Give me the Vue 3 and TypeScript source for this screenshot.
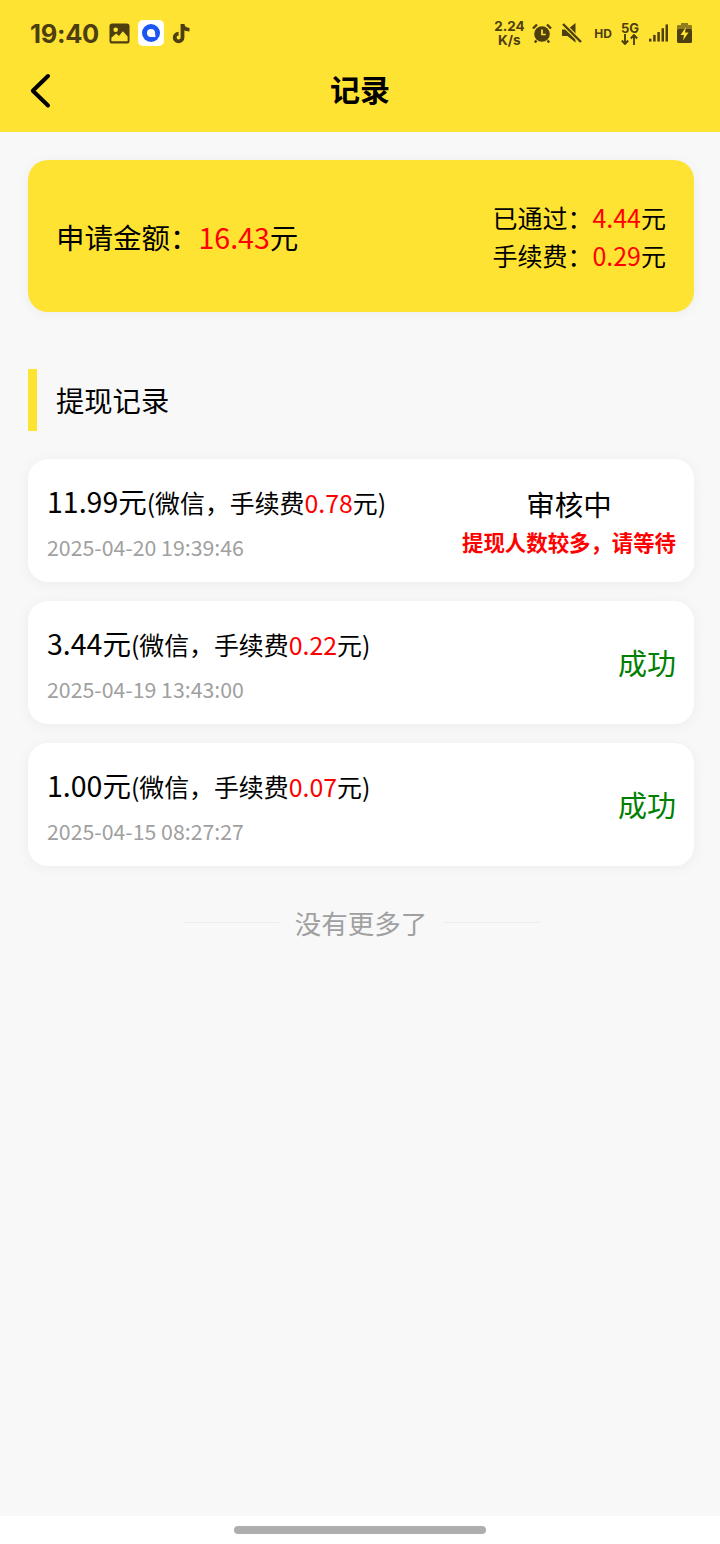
<script setup lang="ts">
interface Rec { amount: string; fee: string; date: string; }
const records: Rec[] = [
  { amount: '3.44', fee: '0.22', date: '2025-04-19 13:43:00' },
  { amount: '1.00', fee: '0.07', date: '2025-04-15 08:27:27' },
];
</script>

<template>
  <div class="page">
    <header class="head">
      <div class="status">
        <div class="st-left">
          <span class="time">19:40</span>
          <svg class="ic-photo" width="21" height="21" viewBox="0 0 22 22">
            <rect x="0.5" y="0.5" width="21" height="21" rx="3" fill="#4d3f10"/>
            <circle cx="7" cy="7" r="2.4" fill="#ffe333"/>
            <path d="M2.5 19v-3.500l5-4.500 3 2.600 4-5 5 5.600V19z" fill="#ffe333"/>
          </svg>
          <span class="app-tile">
            <svg width="18" height="18" viewBox="0 0 18 18">
              <circle cx="9" cy="9" r="9" fill="#1c56f0"/>
              <circle cx="9" cy="9" r="4" fill="#fff"/>
              <path d="M9 13h4.500L13 8.500z" fill="#fff"/>
            </svg>
          </span>
          <svg class="ic-tt" width="20" height="21" viewBox="0 0 20 21">
            <path d="M10.500 1v13.500a3.900 3.900 0 1 1-3.900-3.900" fill="none" stroke="#4d3f10" stroke-width="3.800"/>
            <path d="M10.500 1.500c.4 3 2.900 5 7 5.200" fill="none" stroke="#4d3f10" stroke-width="3.600"/>
          </svg>
        </div>
        <div class="st-right">
          <span class="speed">2.24<br>K/s</span>
          <svg class="ic-alarm" width="20" height="20" viewBox="0 0 20 20">
            <circle cx="10" cy="11" r="7.800" fill="#4d3f10"/>
            <path d="M1 5.500 5 1.500M19 5.500l-4-4M4.500 17.500 2.800 19.500M15.500 17.500l1.700 2" stroke="#4d3f10" stroke-width="2.400" fill="none"/>
            <path d="M10 6.500v5h3.800" stroke="#ffe333" stroke-width="1.700" fill="none"/>
          </svg>
          <svg class="ic-mute" width="20" height="20" viewBox="0 0 20 20">
            <path d="M0 6.500h5.500L13.500 0v19.500l-8-6.500H0z" fill="#4d3f10"/>
            <path d="M1 1 19 19" stroke="#ffe333" stroke-width="4.500"/>
            <path d="M1 1 19 19" stroke="#4d3f10" stroke-width="2.400"/>
          </svg>
          <span class="hd">HD</span>
          <span class="net">
            <span class="net-g">5G</span>
            <svg width="17" height="11" viewBox="0 0 17 11">
              <path d="M4 0v10M.8 6.500 4 10l3.200-3.500M13 11V1M9.800 4.500 13 1l3.200 3.500" stroke="#4d3f10" stroke-width="1.900" fill="none"/>
            </svg>
          </span>
          <svg class="ic-sig" width="19" height="18" viewBox="0 0 20 18">
            <rect x="0" y="15" width="2.600" height="3" fill="#4d3f10"/>
            <rect x="4.400" y="11" width="2.600" height="7" fill="#4d3f10"/>
            <rect x="8.800" y="8" width="2.600" height="10" fill="#4d3f10"/>
            <rect x="13.200" y="4" width="2.600" height="14" fill="#4d3f10"/>
            <rect x="17.400" y="0" width="2.600" height="18" fill="#4d3f10"/>
          </svg>
          <svg class="ic-bat" width="15" height="20" viewBox="0 0 15 20">
            <rect x="4" y="0" width="7" height="2.500" fill="#8f7d20"/>
            <rect x="0" y="2" width="15" height="5" rx="1" fill="#8f7d20"/>
            <rect x="0" y="6" width="15" height="14" rx="1.500" fill="#4d3f10"/>
            <path d="M9 4 3.500 12H7L6 17.500l5.500-8H8z" fill="#ffe333"/>
          </svg>
        </div>
      </div>
      <div class="nav">
        <svg class="back" width="24" height="36" viewBox="0 0 24 36">
          <path d="M21 3 5.800 17.800 21 32.500" fill="none" stroke="#000" stroke-width="4" stroke-linecap="round" stroke-linejoin="round"/>
        </svg>
        <h1 class="title">记录</h1>
      </div>
    </header>

    <main class="content">
      <section class="summary">
        <div class="sum-main">申请金额：<span class="red">16.43</span>元</div>
        <div class="sum-side">
          <div>已通过：<span class="red">4.44</span>元</div>
          <div>手续费：<span class="red">0.29</span>元</div>
        </div>
      </section>

      <div class="section-title">提现记录</div>

      <ul class="list">
        <li class="card">
          <div class="info">
            <div class="line"><span class="amt">11.99元</span>(微信，手续费<span class="red">0.78</span>元)</div>
            <div class="date">2025-04-20 19:39:46</div>
          </div>
          <div class="state">
            <div class="pending">审核中</div>
            <div class="note">提现人数较多，请等待</div>
          </div>
        </li>
        <li v-for="r in records" :key="r.date" class="card">
          <div class="info">
            <div class="line"><span class="amt">{{ r.amount }}元</span>(微信，手续费<span class="red">{{ r.fee }}</span>元)</div>
            <div class="date">{{ r.date }}</div>
          </div>
          <div class="state">
            <div class="ok">成功</div>
          </div>
        </li>
      </ul>

      <div class="end">
        <span class="rule"></span>
        <span class="end-text">没有更多了</span>
        <span class="rule"></span>
      </div>
    </main>

    <footer class="gesture"><span class="pill"></span></footer>
  </div>
</template>

<style>
html, body { margin: 0; background: #fff; }
</style>

<style scoped>
.page {
  width: 720px;
  height: 1544px;
  display: flex;
  flex-direction: column;
  background: #f8f8f8;
  font-family: "Noto Sans CJK SC", "Noto Sans", sans-serif;
  color: #000;
  overflow: hidden;
}
.head {
  height: 132px;
  background: #ffe333;
  flex: none;
}
.status {
  height: 66px;
  display: flex;
  justify-content: space-between;
  align-items: center;
  padding: 0 28px 0 30px;
  color: #4d3f10;
}
.st-left, .st-right { display: flex; align-items: center; }
.time {
  font-family: Inter, Roboto, sans-serif;
  font-size: 25.500px;
  font-weight: 700;
  letter-spacing: -0.3px;
  width: 79px;
}
.app-tile {
  width: 26px;
  height: 26px;
  margin-left: 8px;
  border-radius: 5px;
  background: #fff;
  display: flex;
  align-items: center;
  justify-content: center;
}
.ic-tt { margin-left: 8px; }
.speed {
  font-family: Inter, Roboto, sans-serif;
  font-size: 13.500px;
  font-weight: 700;
  line-height: 14px;
  text-align: center;
  width: 30px;
}
.ic-alarm { margin-left: 8px; }
.ic-mute { margin-left: 10px; }
.hd {
  font-family: Inter, Roboto, sans-serif;
  font-size: 12px;
  font-weight: 700;
  margin-left: 12px;
}
.net {
  display: flex;
  flex-direction: column;
  align-items: center;
  margin-left: 9px;
  font-family: Inter, Roboto, sans-serif;
  font-size: 13px;
  font-weight: 700;
  line-height: 12px;
}
.ic-sig { margin-left: 10px; }
.ic-bat { margin-left: 9px; }
.nav {
  height: 50px;
  display: grid;
  grid-template-columns: 1fr auto 1fr;
  align-items: center;
}
.back { margin-left: 27px; }
.title {
  margin: 0 0 6px;
  font-size: 30px;
  font-weight: 700;
  line-height: 44px;
}
.content {
  flex: 1;
  padding: 28px 26px 0 28px;
}
.red { color: #f00; }
.summary {
  height: 152px;
  border-radius: 20px;
  background: #ffe333;
  box-shadow: 0 2px 12px rgba(0, 0, 0, 0.05);
  display: flex;
  align-items: center;
  justify-content: space-between;
  padding: 0 28px;
}
.sum-main { font-size: 28.500px; line-height: 40px; margin-top: 2px; }
.sum-side { font-size: 25px; line-height: 38px; text-align: right; margin-top: -1px; }
.section-title {
  margin-top: 57px;
  height: 62px;
  border-left: 9px solid #ffe333;
  padding-left: 19px;
  font-size: 28.300px;
  line-height: 62px;
}
.list {
  list-style: none;
  margin: 28px 0 0;
  padding: 0;
  display: flex;
  flex-direction: column;
  gap: 19.500px;
}
.card {
  height: 122.500px;
  box-sizing: border-box;
  background: #fff;
  border-radius: 20px;
  box-shadow: 0 2px 14px rgba(0, 0, 0, 0.05);
  display: flex;
  align-items: center;
  justify-content: space-between;
  padding: 0 18px 0 19px;
}
.info { margin-top: 3px; }
.line { font-size: 24.900px; line-height: 40px; white-space: nowrap; }
.amt { font-size: 28.500px; }
.date { font-size: 21.300px; line-height: 32px; color: #a0a0a0; margin-top: 9px; }
.state { text-align: center; }
.pending { font-size: 28.500px; line-height: 38px; margin-top: 4px; }
.note { font-size: 21.400px; font-weight: 700; color: #f00; line-height: 36px; margin-top: 1px; }
.ok { font-size: 29px; line-height: 40px; color: #008000; }
.end {
  margin-top: 37.500px;
  display: flex;
  align-items: center;
  justify-content: center;
  gap: 16px;
  color: #a0a0a0;
  height: 40px;
}
.rule { width: 96px; height: 1px; background: #ececec; margin-bottom: 1px; }
.end-text { font-size: 26.500px; line-height: 40px; }
.gesture {
  flex: none;
  height: 28px;
  background: #fff;
  display: flex;
  justify-content: center;
  padding-top: 10px;
  box-sizing: border-box;
}
.pill { width: 252px; height: 8px; border-radius: 4px; background: #aeaeae; }
</style>
